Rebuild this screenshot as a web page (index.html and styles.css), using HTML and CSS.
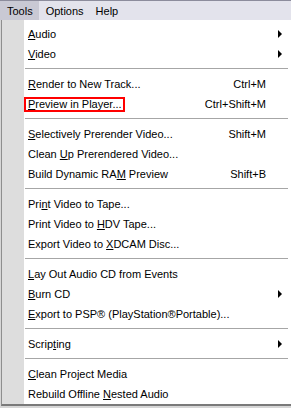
FILE: index.html
```html
<!DOCTYPE html>
<html lang="en">
<head>
  <meta charset="UTF-8" />
  <title>Tools Menu</title>
  <link rel="stylesheet" href="styles.css">
</head>
<body>
  <div class="menubar">
    <span class="menubar-item open">Tools</span>
    <span class="menubar-item">Options</span>
    <span class="menubar-item">Help</span>
  </div>

  <div class="menu">
    <div class="item"><span class="label"><u>A</u>udio</span><span class="arrow"></span></div>
    <div class="item"><span class="label"><u>V</u>ideo</span><span class="arrow"></span></div>
    <div class="sep"></div>

    <div class="item"><span class="label"><u>R</u>ender to New Track...</span><span class="key">Ctrl+M</span></div>
    <div class="item"><span class="label boxed"><u>P</u>review in Player...</span><span class="key">Ctrl+Shift+M</span></div>
    <div class="sep"></div>

    <div class="item"><span class="label"><u>S</u>electively Prerender Video...</span><span class="key">Shift+M</span></div>
    <div class="item"><span class="label">Clean <u>U</u>p Prerendered Video...</span></div>
    <div class="item"><span class="label">Build Dynamic RA<u>M</u> Preview</span><span class="key">Shift+B</span></div>
    <div class="sep"></div>

    <div class="item"><span class="label">Pri<u>n</u>t Video to Tape...</span></div>
    <div class="item"><span class="label">Print Video to <u>H</u>DV Tape...</span></div>
    <div class="item"><span class="label">Export Video to <u>X</u>DCAM Disc...</span></div>
    <div class="sep"></div>

    <div class="item"><span class="label"><u>L</u>ay Out Audio CD from Events</span></div>
    <div class="item"><span class="label"><u>B</u>urn CD</span><span class="arrow"></span></div>
    <div class="item"><span class="label"><u>E</u>xport to PSP® (PlayStation®Portable)...</span></div>
    <div class="sep"></div>

    <div class="item"><span class="label">Scrip<u>t</u>ing</span><span class="arrow"></span></div>
    <div class="sep"></div>

    <div class="item"><span class="label"><u>C</u>lean Project Media</span></div>
    <div class="item"><span class="label">Rebuild Offline <u>N</u>ested Audio</span></div>
  </div>
</body>
</html>
```

FILE: styles.css
```css
html, body {
  margin: 0;
  padding: 0;
}

body {
  background-color: #d6d6d6;
  font-family: "Liberation Sans", Arial, sans-serif;
  font-size: 11px;
  color: #000;
  height: 408px;
  overflow: hidden;
}

.menubar {
  display: flex;
  height: 19px;
  border-top: 1px solid #8c8c9c;
  background-color: #e3e3ec;
}

.menubar-item {
  display: flex;
  align-items: center;
  padding: 0 6px 0 6px;
}

.menubar-item.open {
  background-color: #c9c9d4;
  padding-left: 7px;
}

.menubar-item.open + .menubar-item {
  padding-left: 7px;
}

.menu {
  margin-left: 1px;
  width: 288px;
  height: 380px;
  padding: 4px 0 0 1px;
  border-left: 1px solid #8e8e8e;
  border-bottom: 2px solid #7a7a7a;
  background: linear-gradient(to right, #dddddd 22px, #ffffff 22px);
}

.item {
  display: flex;
  align-items: center;
  height: 20px;
  padding-left: 25px;
  padding-right: 25px;
}

.label {
  flex: 1;
  white-space: nowrap;
}

.boxed {
  flex: none;
  margin-left: -4px;
  padding: 0 1px 0 2px;
  border: 2px solid #ff0000;
  line-height: 11px;
}

.boxed + .key {
  margin-left: auto;
}

.key {
  white-space: nowrap;
}

.arrow {
  width: 0;
  height: 0;
  margin-right: -16px;
  border-top: 4px solid transparent;
  border-bottom: 4px solid transparent;
  border-left: 4px solid #000;
}

.sep {
  height: 10px;
  margin-left: 22px;
  margin-right: 3px;
  background: linear-gradient(#ffffff 4px, #a6a6a6 4px, #a6a6a6 5px, #ffffff 5px);
}
```
